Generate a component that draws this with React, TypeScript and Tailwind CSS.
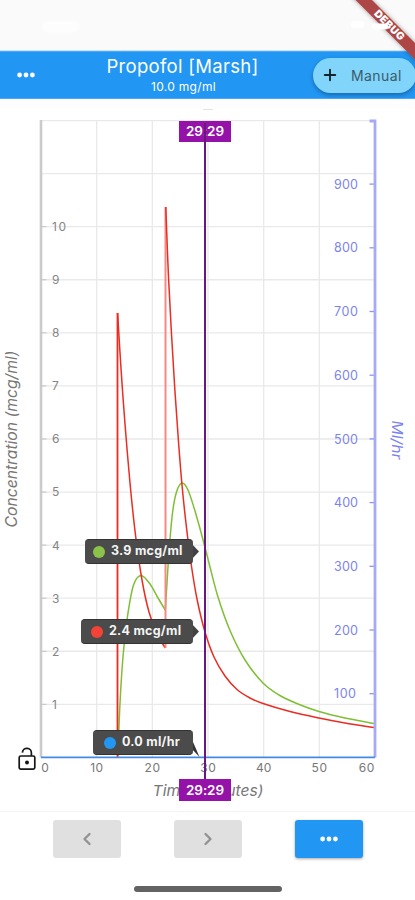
import React from 'react';
import { Plus, ChevronLeft, ChevronRight } from 'lucide-react';

type Point = [number, number];

// Plot area inside the chart svg
const LEFT = 41;
const RIGHT = 375;
const TOP = 22;
const BOTTOM = 658.4;

const xAt = (minutes: number) => LEFT + (minutes * (RIGHT - LEFT)) / 60;
const yAt = (mcg: number) => BOTTOM - mcg * 53.07;
const yRate = (ml: number) => BOTTOM - ml * 0.637;

const MINUTES = [0, 10, 20, 30, 40, 50, 60];
const MCG = [1, 2, 3, 4, 5, 6, 7, 8, 9, 10];
const RATES = [100, 200, 300, 400, 500, 600, 700, 800, 900];

const plasmaFirst: Point[] = [
    [117.6, 214], [121.1, 271], [125, 325], [130, 384], [135.5, 436], [142, 481], [149, 513], [157, 535], [165.3, 549],
];

const plasmaSecond: Point[] = [
    [165.8, 108], [168.4, 176], [171.5, 235], [174.8, 290], [178.3, 340], [182, 386], [186.3, 427], [191, 464], [197, 500],
    [205, 533], [214, 558], [225, 577], [237, 590.5], [250, 599], [263, 604.5], [290, 612.5], [319, 619], [345, 624], [374, 628.5],
];

const effectFirst: Point[] = [
    [118, 657], [119.4, 617], [121.5, 578], [124, 547], [128, 514], [133.5, 486], [141, 476.5], [150, 485], [158, 499], [165.3, 511],
];

const effectSecond: Point[] = [
    [165.3, 511], [167, 484], [169.2, 450], [172.5, 414], [176.5, 393], [182, 384], [188, 391], [195, 412], [202, 437],
    [209, 464], [218, 498], [230, 531.5], [245, 561], [263, 584], [279, 596], [298, 605], [319, 612.5], [345, 619], [374, 624.5],
];

// Catmull-Rom through the samples
const smooth = (pts: Point[]) => {
    let d = `M${pts[0][0]} ${pts[0][1]}`;
    for (let i = 0; i < pts.length - 1; i++) {
        const a = pts[i - 1] || pts[i];
        const b = pts[i];
        const c = pts[i + 1];
        const e = pts[i + 2] || c;
        d += ` C${b[0] + (c[0] - a[0]) / 6} ${b[1] + (c[1] - a[1]) / 6} ${c[0] - (e[0] - b[0]) / 6} ${c[1] - (e[1] - b[1]) / 6} ${c[0]} ${c[1]}`;
    }
    return d;
};

const Dots: React.FC = () => (
    <svg width="18" height="6" viewBox="0 0 18 6" fill="white">
        <circle cx="2.6" cy="3" r="2.4" />
        <circle cx="9" cy="3" r="2.4" />
        <circle cx="15.4" cy="3" r="2.4" />
    </svg>
);

const StatusBar: React.FC = () => (
    <div className="h-[50px] bg-[#fafafa] flex items-start justify-between">
        <div className="mt-[21px] ml-[42px] w-[37px] h-[11px] bg-white/60 rounded-sm blur-[1px]" />
        <div className="mt-[21px] mr-[51px] w-[13px] h-[7px] bg-white rounded-sm blur-[0.5px]" />
    </div>
);

const DebugRibbon: React.FC = () => (
    <svg className="absolute top-0 right-0 pointer-events-none" width="75" height="70" viewBox="340 0 75 70">
        <defs>
            <filter id="ribbon" x="-20%" y="-20%" width="140%" height="140%">
                <feDropShadow dx="0" dy="0" stdDeviation="2.2" floodColor="#000" floodOpacity="0.4" />
            </filter>
        </defs>
        <path d="M341.5 -14 H358 L429 57 V73.5 Z" fill="#ad4747" filter="url(#ribbon)" />
        <text
            transform="translate(389.3 25.2) rotate(45)"
            textAnchor="middle"
            dominantBaseline="central"
            textLength="38"
            className="text-[10.5px] font-black fill-white"
        >
            DEBUG
        </text>
        <rect x="372" y="23.5" width="16" height="6" rx="2.5" fill="white" />
    </svg>
);

const Header: React.FC = () => (
    <header className="h-[48px] bg-[#2196f3] flex items-center border-t border-b border-[#4fa9f3]">
        <button className="w-[52px] flex items-center justify-center">
            <Dots />
        </button>
        <div className="flex-1 flex flex-col items-center text-white">
            <h1 className="text-[18.5px] leading-[23px] tracking-[0.3px] whitespace-nowrap">Propofol [Marsh]</h1>
            <span className="text-[12px] leading-[17px] tracking-[0.3px] pl-[2px]">10.0 mg/ml</span>
        </div>
        <button className="w-[103px] h-[35px] mr-[-1px] rounded-full bg-[#81d4fa] flex items-center pl-[8px] gap-[12px] shadow-[0_2px_4px_rgba(0,0,0,0.3)]">
            <Plus size={18} strokeWidth={2.5} className="text-[#17232b] shrink-0" />
            <span className="text-[14px] tracking-[0.4px] text-[#3a5c6c]">Manual</span>
        </button>
    </header>
);

const Chart: React.FC = () => (
    <svg className="block" width="415" height="712" viewBox="0 0 415 712">
        <rect x="0" y="0" width="415" height="10" fill="#fdfdfd" />
        <path d="M203 10.5 H213" stroke="#e2e2e2" />

        {/* Grid */}
        <g stroke="#e9e9e9" strokeWidth="1.3">
            {[...MCG, 11, 12].map((v) => (
                <path key={v} d={`M${LEFT} ${yAt(v)} H${RIGHT}`} />
            ))}
            {[10, 20, 30, 40, 50].map((m) => (
                <path key={m} d={`M${xAt(m)} ${TOP} V${BOTTOM}`} />
            ))}
        </g>

        {/* Left axis */}
        <path d={`M${LEFT} ${TOP - 1} V${BOTTOM}`} stroke="#cbcbcb" strokeWidth="2.6" />
        <g className="text-[12px] fill-[#858585]">
            {MCG.map((v) => (
                <React.Fragment key={v}>
                    <path d={`M${LEFT} ${yAt(v)} h5.5`} stroke="#c4c4c4" />
                    <text x="52" y={yAt(v) + 4.4} textLength={v === 10 ? 14 : undefined}>{v}</text>
                </React.Fragment>
            ))}
        </g>

        {/* Right axis */}
        <g className="text-[12.5px] fill-[#7b83f0]">
            {RATES.map((v) => (
                <React.Fragment key={v}>
                    <text x="334" y={yRate(v) + 4.6} textLength={v === 100 ? 22 : 24}>{v}</text>
                    <path d={`M369.5 ${yRate(v)} h5`} stroke="#8c96f3" strokeWidth="1.3" />
                </React.Fragment>
            ))}
        </g>

        <g fill="none" strokeWidth="1.5">
            <path d={smooth(effectFirst)} stroke="#7fbf35" />
            <path d={smooth(effectSecond)} stroke="#7fbf35" />
            <path d={`M117.5 ${BOTTOM} V214`} stroke="#f4281f" strokeWidth="1.8" />
            <path d={smooth(plasmaFirst)} stroke="#ea2c22" />
            <path d="M165.5 549 V108" stroke="#f58a84" strokeWidth="2" />
            <path d={smooth(plasmaSecond)} stroke="#ea2c22" />
        </g>

        <path d={`M369.5 ${TOP} H375 V${BOTTOM}`} fill="none" stroke="#a6aaf5" strokeWidth="2.8" />
        <path d={`M${LEFT} ${BOTTOM} H${RIGHT}`} stroke="#4489e2" strokeWidth="1.6" />

        <g className="text-[12px] fill-[#777777]" textAnchor="middle">
            {MINUTES.map((m) => (
                <text key={m} x={m === 0 ? 45 : m === 60 ? 366.5 : xAt(m)} y="673" textLength={m === 0 ? undefined : m === 10 ? 13 : 15.5}>{m}</text>
            ))}
        </g>

        <g className="italic" textAnchor="middle">
            <text x="208" y="696.5" textLength="111" lengthAdjust="spacingAndGlyphs" className="text-[15px] fill-[#777777]">Time (minutes)</text>
            <text transform="translate(16.5 340) rotate(-90)" textLength="177" lengthAdjust="spacingAndGlyphs" className="text-[15.5px] fill-[#777777]">Concentration (mcg/ml)</text>
            <text transform="translate(391.5 341) rotate(90)" textLength="39" lengthAdjust="spacingAndGlyphs" className="text-[14.5px] fill-[#7b83f0]">Ml/hr</text>
        </g>

        {/* Unlocked padlock */}
        <g transform="translate(18 649)" fill="none" stroke="#161616" strokeWidth="1.7">
            <rect x="1.2" y="8" width="15.6" height="13.2" rx="1.6" />
            <path d="M4.4 4.6 A4.5 4.5 0 0 1 13.4 5.2 V8" />
            <circle cx="9" cy="14.5" r="2" fill="#161616" stroke="none" />
        </g>

        {/* Pointers of the value tags */}
        <path d="M191 444 L199 452.5 L191 461 Z M191 524 L199 532.5 L191 541 Z" fill="#424242" />
        <path d="M190 636 L199.5 658 L190 648 Z" fill="#333333" />
    </svg>
);

interface ValueTagProps {
    className: string;
    dot: string;
    label: string;
}

const ValueTag: React.FC<ValueTagProps> = ({ className, dot, label }) => (
    <div className={`absolute flex items-center h-[25px] gap-[6px] rounded-[4px] bg-[#4b4b4b] border-y border-[#333333] whitespace-nowrap ${className}`}>
        <span className={`w-[12px] h-[12px] rounded-full shrink-0 ${dot}`} />
        <span className="text-[12.5px] font-bold tracking-[0.25px] text-[#f5f5f5]">{label}</span>
    </div>
);

const TimeFlag: React.FC<{ className: string }> = ({ className }) => (
    <div className={`absolute left-[179px] w-[52px] flex items-center justify-center bg-[#9512a8] text-white text-[13.5px] font-semibold tracking-[-0.1px] ${className}`}>
        29:29
    </div>
);

const App: React.FC = () => {
    return (
        <div className="relative w-[415px] h-[900px] bg-white overflow-hidden flex flex-col font-['Inter','Liberation_Sans',sans-serif]">
            <StatusBar />
            <div className="h-px bg-[#c5e0fa]" />
            <Header />

            <main className="relative h-[712px]">
                <Chart />
                <TimeFlag className="top-[22px] h-[21px]" />
                <div className="absolute left-[204px] top-[24px] w-[2px] h-[656px] bg-[#6a1680]" />
                <TimeFlag className="top-[680px] h-[22px]" />
                <ValueTag className="left-[85px] top-[440px] w-[108px] pl-[8px]" dot="bg-[#8bc34a]" label="3.9 mcg/ml" />
                <ValueTag className="left-[81px] top-[520px] w-[112px] pl-[10px]" dot="bg-[#f44336]" label="2.4 mcg/ml" />
                <ValueTag className="left-[93px] top-[631px] w-[100px] pl-[11px]" dot="bg-[#2196f3]" label="0.0 ml/hr" />
            </main>

            <footer className="flex-1 border-t border-[#f4f4f4] flex flex-col items-center">
                <div className="w-full flex items-center justify-between pl-[53px] pr-[52px] pt-[8px]">
                    <button className="w-[68px] h-[38px] rounded-[3px] bg-[#e0e0e0] text-[#929292] flex items-center justify-center">
                        <ChevronLeft size={20} strokeWidth={2.8} />
                    </button>
                    <button className="w-[68px] h-[38px] rounded-[3px] bg-[#e0e0e0] text-[#929292] flex items-center justify-center">
                        <ChevronRight size={20} strokeWidth={2.8} />
                    </button>
                    <button className="w-[68px] h-[38px] rounded-[3px] bg-[#2196f3] flex items-center justify-center shadow-[0_1px_3px_rgba(0,0,0,0.35)]">
                        <Dots />
                    </button>
                </div>
                <div className="mt-[28px] w-[148px] h-[6px] rounded-full bg-[#636363]" />
            </footer>

            <DebugRibbon />
        </div>
    );
};

export default App;
